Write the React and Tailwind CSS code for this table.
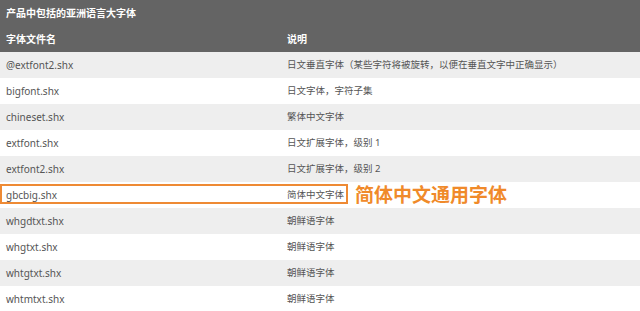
import React from 'react';

const rows = [
  ['@extfont2.shx', '日文垂直字体（某些字符将被旋转，以便在垂直文字中正确显示）'],
  ['bigfont.shx', '日文字体，字符子集'],
  ['chineset.shx', '繁体中文字体'],
  ['extfont.shx', '日文扩展字体，级别 1'],
  ['extfont2.shx', '日文扩展字体，级别 2'],
  ['gbcbig.shx', '简体中文字体', true],
  ['whgdtxt.shx', '朝鲜语字体'],
  ['whgtxt.shx', '朝鲜语字体'],
  ['whtgtxt.shx', '朝鲜语字体'],
  ['whtmtxt.shx', '朝鲜语字体'],
];

const font = { fontFamily: '"Noto Sans", "Noto Sans CJK SC", sans-serif' };

const App = () => {
  return (
    <div className="w-[640px] h-[311px] overflow-hidden bg-white text-[10px]" style={font}>
      {/* table header */}
      <div className="bg-[#646464] text-white font-bold">
        <div className="h-[26px] flex items-center px-[6px]">产品中包括的亚洲语言大字体</div>
        <div className="h-[26px] grid grid-cols-[281px_1fr] items-center">
          <div className="px-[6px]">字体文件名</div>
          <div className="px-[6px]">说明</div>
        </div>
      </div>

      {/* rows */}
      {rows.map(([file, desc, marked], i) => (
        <div
          key={file}
          className={`relative h-[26px] grid grid-cols-[281px_1fr] items-center text-[#555] ${i % 2 === 0 ? 'bg-[#eeeeee]' : 'bg-white'}`}
        >
          <div className="px-[6px]">{file}</div>
          <div className="px-[6px] flex items-center">
            <span className="text-[9.5px]">{desc}</span>
            {marked && (
              <span className="ml-[11px] text-[19px] font-bold text-[#f08a2a] leading-none">简体中文通用字体</span>
            )}
          </div>
          {marked && (
            <div className="absolute left-0 top-[2px] w-[348px] h-[20px] border-2 border-[#ee8a34] pointer-events-none" />
          )}
        </div>
      ))}
    </div>
  );
};

export default App;
